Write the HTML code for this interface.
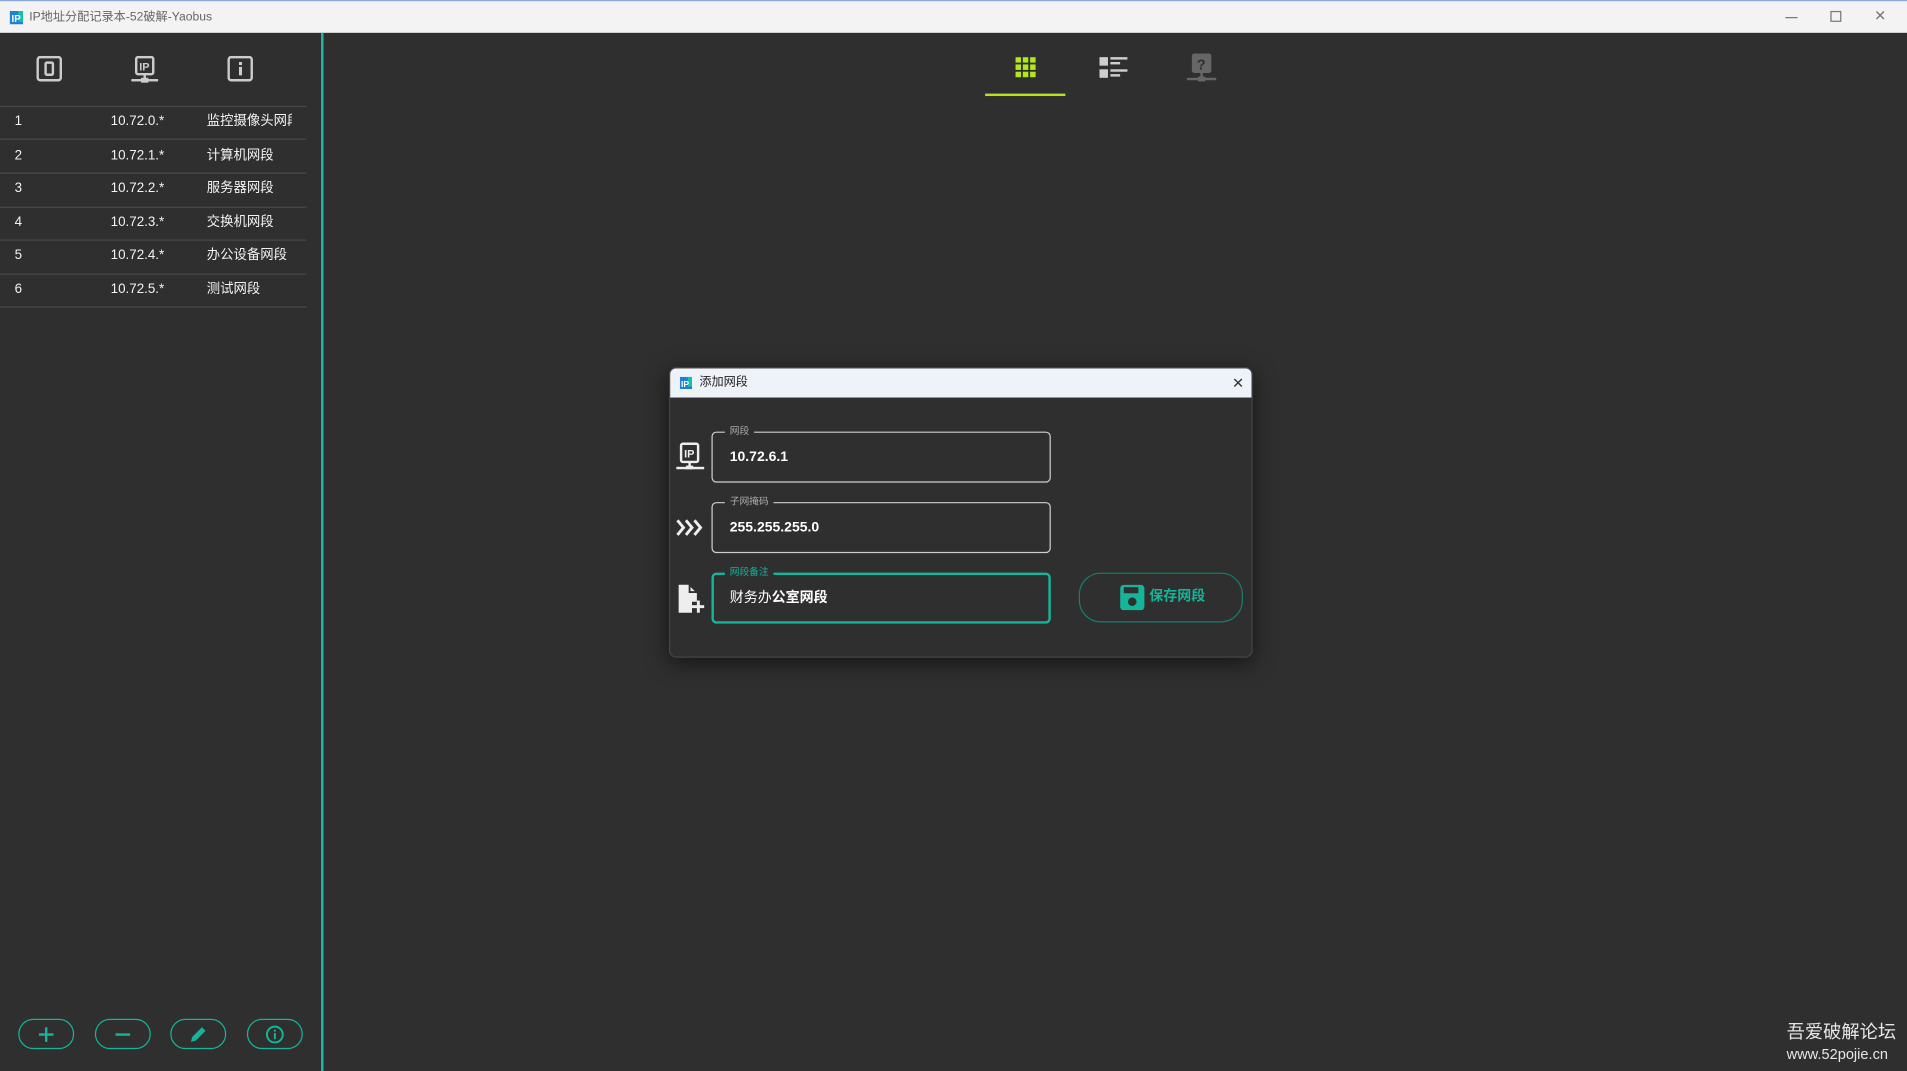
<!DOCTYPE html>
<html><head><meta charset="utf-8"><style>
*{margin:0;padding:0;box-sizing:border-box}
html,body{width:1907px;height:1071px;overflow:hidden;background:#2f2f2f}
#w{position:absolute;left:0;top:0;width:1568px;height:881px;transform:scale(1.2162,1.2157);transform-origin:0 0;background:#2f2f2f;font-family:"Liberation Sans","Noto Sans CJK SC",sans-serif;color:#fff}
.a{position:absolute}
.tb{left:0;top:0;width:1568px;height:27px;background:#f3f3f3;border-top:1px solid #8aa9d6}
.row{left:0;width:252px;height:1px;background:#4a4a4a}
.t{font-size:11px;line-height:14px;height:14px;color:#f2f2f2}
.pill{width:46px;height:25px;border:1px solid #14b59a;border-radius:13px;top:838px}
.field{left:585px;width:279px;height:42px;border:1px solid #cfcfcf;border-radius:4px}
.lab{position:absolute;left:10px;top:-6px;background:#2f2f2f;padding:0 4px;font-size:8px;color:#aaa;line-height:10px}
.val{position:absolute;left:14px;top:13px;font-size:11.5px;line-height:14px;font-weight:bold;color:#fff}
</style></head><body><div id="w">
<div class="a tb">
 <svg class="a" style="left:8px;top:8px" width="11" height="11" viewBox="0 0 11 11"><rect x="0" y="0" width="11" height="11" fill="#1d7fd6"/><rect x="7" y="0" width="4" height="9" fill="#18c0a8"/><text x="1.5" y="9" font-size="8" fill="#fff" font-family="Liberation Sans" font-weight="bold">IP</text></svg>
 <div class="a" style="left:24px;top:7px;font-size:10px;line-height:13px;color:#666">IP地址分配记录本-52破解-Yaobus</div>
 <div class="a" style="left:1468px;top:13px;width:10px;height:1px;background:#777"></div>
 <div class="a" style="left:1505px;top:8px;width:9px;height:9px;border:1px solid #777"></div>
 <div class="a" style="left:1541px;top:5px;font-size:12px;line-height:14px;color:#777">✕</div>
</div>
<div class="a" style="left:264px;top:27px;width:2px;height:854px;background:#23b8a0"></div>
<svg class="a" style="left:30px;top:46px" width="21" height="21" viewBox="0 0 21 21"><rect x="1" y="1" width="19" height="19" rx="2" fill="none" stroke="#ccc" stroke-width="2"/><rect x="7.5" y="5.5" width="6" height="10" rx="1" fill="none" stroke="#ccc" stroke-width="2"/></svg>
<svg class="a" style="left:107px;top:46px" width="24" height="24" viewBox="0 0 24 24"><rect x="5" y="1" width="14" height="14" rx="1.5" fill="none" stroke="#ccc" stroke-width="2"/><text x="7.5" y="12" font-size="9" font-weight="bold" fill="#ccc" font-family="Liberation Sans">IP</text><rect x="11" y="15" width="2" height="4" fill="#ccc"/><rect x="1" y="19" width="22" height="2" fill="#ccc"/><rect x="9" y="18" width="6" height="4" fill="#ccc"/></svg>
<svg class="a" style="left:187px;top:46px" width="21" height="21" viewBox="0 0 21 21"><rect x="1" y="1" width="19" height="19" rx="2" fill="none" stroke="#ccc" stroke-width="2"/><rect x="9.5" y="5" width="2.5" height="2.5" fill="#ccc"/><rect x="9.5" y="9" width="2.5" height="7" fill="#ccc"/></svg>
<div class="a row" style="top:87px"></div><div class="a row" style="top:114px"></div><div class="a row" style="top:142px"></div><div class="a row" style="top:170px"></div><div class="a row" style="top:197px"></div><div class="a row" style="top:225px"></div><div class="a row" style="top:252px"></div>
<div class="a t" style="left:12px;top:93px">1</div><div class="a t" style="left:91px;top:93px">10.72.0.*</div><div class="a t" style="left:170px;top:93px;width:70px;overflow:hidden;white-space:nowrap">监控摄像头网段</div>
<div class="a t" style="left:12px;top:121px">2</div><div class="a t" style="left:91px;top:121px">10.72.1.*</div><div class="a t" style="left:170px;top:121px">计算机网段</div>
<div class="a t" style="left:12px;top:148px">3</div><div class="a t" style="left:91px;top:148px">10.72.2.*</div><div class="a t" style="left:170px;top:148px">服务器网段</div>
<div class="a t" style="left:12px;top:176px">4</div><div class="a t" style="left:91px;top:176px">10.72.3.*</div><div class="a t" style="left:170px;top:176px">交换机网段</div>
<div class="a t" style="left:12px;top:203px">5</div><div class="a t" style="left:91px;top:203px">10.72.4.*</div><div class="a t" style="left:170px;top:203px">办公设备网段</div>
<div class="a t" style="left:12px;top:231px">6</div><div class="a t" style="left:91px;top:231px">10.72.5.*</div><div class="a t" style="left:170px;top:231px">测试网段</div>
<div class="a pill" style="left:15px"><svg class="a" style="left:15px;top:5px" width="14" height="14"><rect x="6" y="1" width="2" height="12" fill="#14b59a"/><rect x="1" y="6" width="12" height="2" fill="#14b59a"/></svg></div>
<div class="a pill" style="left:78px"><svg class="a" style="left:15px;top:5px" width="14" height="14"><rect x="1" y="6" width="12" height="2" fill="#14b59a"/></svg></div>
<div class="a pill" style="left:140px"><svg class="a" style="left:14px;top:4px" width="16" height="16" viewBox="0 0 16 16"><path d="M2 14 L3 10 L11 2 L14 5 L6 13 Z" fill="#14b59a"/></svg></div>
<div class="a pill" style="left:203px"><svg class="a" style="left:14px;top:4px" width="16" height="16" viewBox="0 0 16 16"><circle cx="8" cy="8" r="6.5" fill="none" stroke="#14b59a" stroke-width="1.6"/><rect x="7.2" y="4" width="1.6" height="1.6" fill="#14b59a"/><rect x="7.2" y="6.8" width="1.6" height="5" fill="#14b59a"/></svg></div>
<svg class="a" style="left:835px;top:47px" width="17" height="17" viewBox="0 0 17 17" fill="#b5e61d"><rect x="0" y="0" width="4.5" height="4.5"/><rect x="6" y="0" width="4.5" height="4.5"/><rect x="12" y="0" width="4.5" height="4.5"/><rect x="0" y="6" width="4.5" height="4.5"/><rect x="6" y="6" width="4.5" height="4.5"/><rect x="12" y="6" width="4.5" height="4.5"/><rect x="0" y="12" width="4.5" height="4.5"/><rect x="6" y="12" width="4.5" height="4.5"/><rect x="12" y="12" width="4.5" height="4.5"/></svg>
<div class="a" style="left:810px;top:77px;width:66px;height:2px;background:#b5e61d"></div>
<svg class="a" style="left:904px;top:45px" width="24" height="20" viewBox="0 0 24 20" fill="#cfcfcf"><rect x="0" y="2" width="7" height="7"/><rect x="9" y="2" width="14" height="2"/><rect x="9" y="6" width="8" height="2"/><rect x="0" y="12" width="7" height="7"/><rect x="9" y="12" width="14" height="2"/><rect x="9" y="16" width="8" height="2"/></svg>
<svg class="a" style="left:975px;top:43px" width="26" height="26" viewBox="0 0 26 26"><rect x="5" y="1" width="16" height="16" rx="2" fill="#666"/><text x="9" y="14" font-size="12" font-weight="bold" fill="#2f2f2f" font-family="Liberation Sans">?</text><rect x="12" y="17" width="2" height="4" fill="#666"/><rect x="1" y="21" width="24" height="2" fill="#666"/><rect x="10" y="20" width="6" height="4" fill="#666"/></svg>
<div class="a" style="left:550px;top:302px;width:480px;height:239px;background:#2f2f2f;border:1px solid #454545;border-radius:6px;box-shadow:0 4px 18px rgba(0,0,0,.55);overflow:hidden">
 <div class="a" style="left:0;top:0;width:480px;height:24px;background:#eef2f9"></div>
 <svg class="a" style="left:8px;top:7px" width="10" height="10" viewBox="0 0 10 10"><rect width="10" height="10" fill="#1d7fd6"/><rect x="6.5" y="0" width="3.5" height="8" fill="#18c0a8"/><text x="1" y="8.5" font-size="7" fill="#fff" font-weight="bold" font-family="Liberation Sans">IP</text></svg>
 <div class="a" style="left:24px;top:5px;font-size:10px;line-height:13px;color:#222">添加网段</div>
 <div class="a" style="left:462px;top:5px;font-size:12px;line-height:14px;color:#333">✕</div>
</div>
<svg class="a" style="left:556px;top:364px" width="24" height="24" viewBox="0 0 24 24"><rect x="4" y="1" width="14" height="15" rx="1.5" fill="none" stroke="#eee" stroke-width="2"/><text x="6.5" y="12.5" font-size="9" font-weight="bold" fill="#eee" font-family="Liberation Sans">IP</text><rect x="10" y="16" width="2" height="4" fill="#eee"/><rect x="0" y="20" width="23" height="2" fill="#eee"/><rect x="8" y="19" width="6" height="3" fill="#eee"/></svg>
<svg class="a" style="left:556px;top:426px" width="24" height="16" viewBox="0 0 24 16" fill="none" stroke="#eee" stroke-width="2.4"><path d="M1 2 L6 8 L1 14 M8 2 L13 8 L8 14 M15 2 L20 8 L15 14"/></svg>
<svg class="a" style="left:557px;top:480px" width="24" height="26" viewBox="0 0 24 26"><path d="M1 1 H9 L16 8 V15 H12 V24 H1 Z" fill="#eee"/><path d="M10 1 L10 7 L16 7" fill="none" stroke="#2f2f2f" stroke-width="1.5"/><rect x="16" y="14" width="2.4" height="10" fill="#eee"/><rect x="12" y="17.8" width="10" height="2.4" fill="#eee"/></svg>
<div class="a field" style="top:355px"><div class="lab">网段</div><div class="val">10.72.6.1</div></div>
<div class="a field" style="top:413px"><div class="lab">子网掩码</div><div class="val">255.255.255.0</div></div>
<div class="a field" style="top:471px;border:2px solid #14b59a"><div class="lab" style="color:#14b59a;left:9px;top:-7px">网段备注</div><div class="val" style="left:13px;top:12px"><span style="font-weight:normal">财务办</span>公室网段</div></div>
<div class="a" style="left:887px;top:471px;width:135px;height:41px;border:1px solid #14806f;border-radius:18px"></div>
<svg class="a" style="left:921px;top:481px" width="20" height="21" viewBox="0 0 20 21"><rect x="0" y="0" width="20" height="21" rx="3" fill="#14b59a"/><rect x="3" y="2" width="12" height="5" fill="#2f2f2f"/><circle cx="10" cy="14" r="3.5" fill="#2f2f2f"/></svg>
<div class="a" style="left:945px;top:484px;font-size:11.5px;line-height:14px;font-weight:bold;color:#14b59a">保存网段</div>
<div class="a" style="left:1469px;top:841px;font-size:15px;line-height:18px;color:#e6e6e6">吾爱破解论坛</div>
<div class="a" style="left:1469px;top:860px;font-size:12px;line-height:14px;color:#e6e6e6">www.52pojie.cn</div>
</div></body></html>
